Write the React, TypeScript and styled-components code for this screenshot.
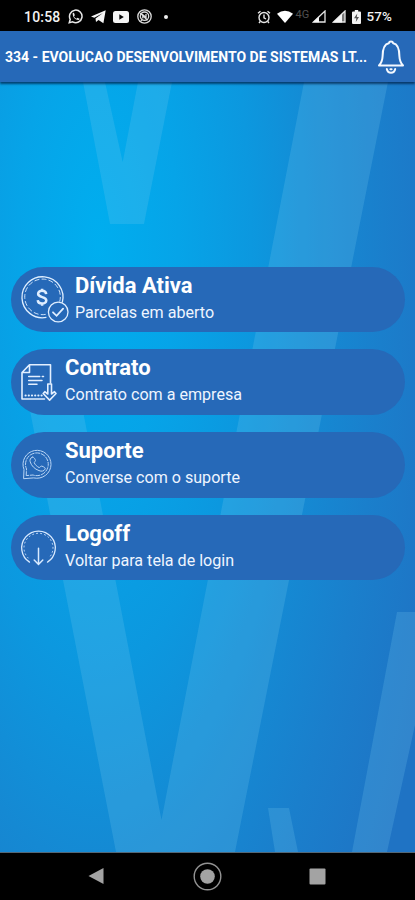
import React from "react";
import styled, { createGlobalStyle } from "styled-components";

const GlobalStyle = createGlobalStyle`
  * { box-sizing: border-box; }
  body { margin: 0; background: #000; }
`;

const Screen = styled.div`
  display: flex;
  flex-direction: column;
  width: 415px;
  height: 900px;
  overflow: hidden;
  color: #fff;
  font-family: Roboto, sans-serif;
  background: #000;
`;

const StatusBar = styled.div`
  display: flex;
  flex: none;
  height: 31px;
  padding: 2px 23px 0 24px;
  align-items: center;
  justify-content: space-between;
  background: #000;
`;

const StatusGroup = styled.div<{ $gap: number }>`
  display: flex;
  align-items: center;
  gap: ${(p) => p.$gap}px;
`;

const StatusText = styled.span<{ $size: number; $spacing?: number }>`
  font-size: ${(p) => p.$size}px;
  line-height: 16px;
  font-weight: 500;
  letter-spacing: ${(p) => p.$spacing ?? 0}px;
  color: #f2f2f2;
`;

const Network = styled.span`
  font-size: 11px;
  line-height: 12px;
  width: 15px;
  margin: -4px -5px 0 -3px;
  color: #505050;
`;

const Dot = styled.span`
  width: 4px;
  height: 4px;
  margin: 0 0 0 4px;
  border-radius: 50%;
  background: #eee;
`;

const Header = styled.header`
  display: flex;
  flex: none;
  position: relative;
  z-index: 1;
  height: 51px;
  padding: 0 10px 0 5px;
  align-items: center;
  justify-content: space-between;
  background: #2669b8;
  box-shadow: 0 2px 2px rgba(0, 35, 75, 0.75);
`;

const Company = styled.h1`
  margin: 0;
  width: 364px;
  font-size: 14px;
  line-height: 20px;
  font-weight: 700;
  letter-spacing: 0.01px;
  white-space: nowrap;
`;

const Content = styled.main`
  display: flex;
  position: relative;
  flex: 1;
  flex-direction: column;
  justify-content: center;
  gap: 17.3px;
  padding: 0 10.5px 87px 11px;
  background: radial-gradient(
    ellipse 365px 1000px at 98px 165px,
    #00aeef 0%,
    #06a4e8 22%,
    #0c98df 42%,
    #1589d3 62%,
    #1a7fcc 78%,
    #1f73c4 100%
  );
`;

const Backdrop = styled.svg`
  position: absolute;
  inset: 0;
`;

const Card = styled.button`
  display: flex;
  position: relative;
  flex: none;
  height: 65.5px;
  padding: 0 0 0 9px;
  align-items: center;
  border: 0;
  border-radius: 33px;
  color: #fff;
  background: #2669b8;
  font-family: inherit;
  text-align: left;
`;

const IconSlot = styled.span<{ $width: number }>`
  display: flex;
  flex: none;
  width: ${(p) => p.$width}px;
`;

const Labels = styled.span`
  display: flex;
  flex-direction: column;
  padding-bottom: 1.4px;
`;

const Title = styled.span`
  font-size: 22px;
  line-height: 28px;
  font-weight: 700;
`;

const Subtitle = styled.span`
  font-size: 16.1px;
  line-height: 26px;
  color: #eef5ff;
`;

const NavBar = styled.nav`
  display: flex;
  flex: none;
  height: 48px;
  padding: 0 89px 1px 88px;
  align-items: center;
  justify-content: space-between;
  border-top: 1px solid #536777;
  background: #000;
`;

const WhatsStatus = () => (
  <svg width="15" height="15" viewBox="0 0 24 24" fill="none" stroke="#e8e8e8" strokeWidth="2.4">
    <path d="M2 22l1.6-5.5A10 10 0 1 1 7.5 20.5Z" />
    <path d="M7.5 6.5l2-.5 1.5 4-1.5 1.5c1 2 2 3 4 4l1.5-1.7 3.5 1.7c.2 5-11.8 1-11-9Z" fill="#e8e8e8" stroke="none" />
  </svg>
);

const Telegram = () => (
  <svg width="15" height="14" viewBox="0 0 15 14">
    <path d="M0 6.6 14.7.2 12.4 13.2 7.5 9.9 5 12.1 4.5 8.5 12 3 3.3 7.8Z" fill="#f5f5f5" />
  </svg>
);

const Youtube = () => (
  <svg width="16" height="12" viewBox="0 0 16 12">
    <rect width="16" height="12" rx="2.5" fill="#f4f4f4" />
    <path d="m6.3 3.2 4.5 2.8-4.5 2.8Z" fill="#050505" />
  </svg>
);

const MutedBadge = () => (
  <svg width="15" height="15" viewBox="0 0 15 15" fill="none" stroke="#ddd" strokeWidth="1.3">
    <circle cx="7.5" cy="7.5" r="6.7" />
    <circle cx="7.5" cy="7.2" r="4.2" />
    <path d="m3.2 4 7.3 7.2M5.8 9.5V5.8L9 8.3V5M5 11.3l-1.5 1" />
  </svg>
);

const Alarm = () => (
  <svg width="14" height="14" viewBox="0 0 14 14" fill="none" stroke="#e7e7e7" strokeWidth="1.4">
    <circle cx="7" cy="7.5" r="5" />
    <path d="M7 4.6v3.2l2 1.2M1 3.3 3.5 1.2M13 3.3l-2.5-2.1M3.2 11.5 2 13M10.8 11.5 12 13" />
  </svg>
);

const Wifi = () => (
  <svg width="16" height="13" viewBox="0 0 16 13">
    <path d="M0 3.8Q8-2.5 16 3.8L8 13Z" fill="#fff" />
  </svg>
);

const Signal = ({ partial = false }: { partial?: boolean }) => (
  <svg width="14" height="13" viewBox="0 0 14 13">
    <path d="M13 1v11H1.5Z" fill={partial ? "none" : "#777"} stroke="#e5e5e5" strokeWidth="1.3" />
    <path d={partial ? "M1 12.3 7 6.5v5.8Z" : "M1 12.5 10 3.7v8.8Z"} fill="#f5f5f5" />
  </svg>
);

const Battery = () => (
  <svg width="9" height="14" viewBox="0 0 9 14">
    <path d="M2.8 0h3.4v1.5H8a1 1 0 0 1 1 1V13a1 1 0 0 1-1 1H1a1 1 0 0 1-1-1V2.5a1 1 0 0 1 1-1h1.8Z" fill="#f2f2f2" />
    <path d="M5.3 3.5 2 8.2h2.3L3.8 12 7 7.1H4.8Z" fill="#555" />
  </svg>
);

const Bell = () => (
  <svg width="28" height="34" viewBox="0 0 28 34" fill="none" stroke="#f3f8ff" strokeWidth="2" strokeLinecap="round" strokeLinejoin="round">
    <path d="M2 25.5h24c-2.2-2.4-3.4-5-3.6-9.3C22.3 8.5 20 3.8 16.2 3.2Q15.8 1.5 14 1.5t-2.2 1.7C8 3.8 5.7 8.5 5.6 16.2 5.4 20.5 4.2 23.1 2 25.5Z" />
    <path d="M9.8 29q.8 3.8 4.2 3.8t4.2-3.8M13.4 29.3h1.2" />
  </svg>
);

const DebtIcon = () => (
  <svg width="49" height="48" viewBox="0 0 49 48" fill="none" stroke="#dfeeff" strokeWidth="1.3">
    <path d="M26.4 42.4A20.5 20.5 0 1 1 42.3 27.5" />
    <path d="M25.7 39.4A17.8 17.8 0 1 1 39.7 26.6" strokeWidth="0.9" strokeDasharray="5 2.2" />
    <path d="M26.2 19.2c-.3-4.5-8.2-4.3-8.1-.3.2 4.2 8.2 2.3 8.2 6.6 0 4.1-8.4 4.1-8.5-.4M22.1 13.7v2.7M22.1 28v2.8" strokeWidth="2.5" />
    <circle cx="38.2" cy="37" r="9.8" />
    <path d="m33 37.3 3.6 3.5 6.5-7.2" strokeWidth="1.8" strokeLinecap="round" />
  </svg>
);

const ContractIcon = () => (
  <svg width="38" height="38" viewBox="0 0 38 38" fill="none" stroke="#e2efff" strokeWidth="1.6" strokeLinecap="round" strokeLinejoin="round">
    <path d="M24.5 36H2V9.5L9.5 1.8h21V20M9.5 2v7.5H2.3" />
    <path d="M8.7 13.5h11M22.3 13.5h1.2M8.7 17.5H22M8.7 21.3h8.3" strokeWidth="1.5" />
    <path d="M5.5 32.5h19" strokeWidth="2" strokeDasharray=".2 3" />
    <path d="M27.8 21h3.7v10l3-2.3 1.5 1.8-6.4 6.6-6.4-6.6 1.6-1.8 3 2.3Z" />
  </svg>
);

const SupportIcon = () => (
  <svg width="34" height="31" viewBox="0 0 34 31" fill="none" stroke="#b9d5f5" strokeWidth="1" strokeLinecap="round" strokeLinejoin="round">
    <path d="M3.6 29.3 4 20.5A14 14 0 1 1 14 29Z" />
    <path d="M6.2 26.6 6.5 20A11.4 11.4 0 1 1 13 26Z" strokeDasharray="4 1.6" />
    <path d="M12.1 8.2c1.5-.8 2.8 1.4 3.4 3.3.2 1-1.6 1.6-1.3 2.2 1 2.2 2.8 3.8 4.8 4.8.8.4 1.7-1.8 2.8-1.4 2 .8 4 1.5 3.3 3-1.1 2.2-3.6 2.5-6.1 1.5-4.4-1.6-7.5-4.7-8.8-8.7-.7-2.1.3-4 1.9-4.7Z" />
  </svg>
);

const LogoffIcon = () => (
  <svg width="37" height="36" viewBox="0 0 37 36" fill="none" stroke="#d8eaff" strokeWidth="1.3" strokeLinecap="round">
    <path d="M9.5 32.1A16.8 16.8 0 1 1 27.5 32.1" />
    <path d="M8.2 28A14.5 14.5 0 1 1 28.8 28" strokeWidth="0.9" strokeDasharray="1 3" />
    <path d="M18.5 18.2v15.7M14.2 30l4.3 4.4 4.3-4.4" strokeWidth="1.5" />
  </svg>
);

const items = [
  { title: "Dívida Ativa", subtitle: "Parcelas em aberto", Icon: DebtIcon, width: 55 },
  { title: "Contrato", subtitle: "Contrato com a empresa", Icon: ContractIcon, width: 45 },
  { title: "Suporte", subtitle: "Converse com o suporte", Icon: SupportIcon, width: 45 },
  { title: "Logoff", subtitle: "Voltar para tela de login", Icon: LogoffIcon, width: 45 },
];

export default function App() {
  return (
    <>
      <GlobalStyle />
      <Screen>
        <StatusBar>
          <StatusGroup $gap={7.6}>
            <StatusText $size={14} $spacing={0.2}>10:58</StatusText>
            <WhatsStatus />
            <Telegram />
            <Youtube />
            <MutedBadge />
            <Dot />
          </StatusGroup>
          <StatusGroup $gap={6}>
            <Alarm />
            <Wifi />
            <Network>4G</Network>
            <Signal partial />
            <Signal />
            <Battery />
            <StatusText $size={13.4} $spacing={0.1}>57%</StatusText>
          </StatusGroup>
        </StatusBar>
        <Header>
          <Company>334 - EVOLUCAO DESENVOLVIMENTO DE SISTEMAS LT...</Company>
          <Bell />
        </Header>
        <Content>
          <Backdrop width="415" height="770" viewBox="0 82 415 770" fill="#75c7ee" fillOpacity=".22">
            <path d="M83 82h22l17.7 80L138 82h34l-28 142h-34Z" />
            <path d="M25 385h53L161.5 820 304 82h84L235 852H116Z" />
            <path d="M397 612h18v113l-28 127h-35ZM268 808h21l9 44h-23Z" />
          </Backdrop>
          {items.map(({ title, subtitle, Icon, width }) => (
            <Card key={title}>
              <IconSlot $width={width}><Icon /></IconSlot>
              <Labels>
                <Title>{title}</Title>
                <Subtitle>{subtitle}</Subtitle>
              </Labels>
            </Card>
          ))}
        </Content>
        <NavBar>
          <svg width="17" height="18" viewBox="0 0 17 18"><path d="M.5 9 15.5 1v16Z" fill="#a3a3a3" /></svg>
          <svg width="29" height="29" viewBox="0 0 29 29"><circle cx="14.5" cy="14.5" r="13.3" fill="none" stroke="#929292" strokeWidth="1.4" /><circle cx="14.5" cy="14.5" r="7.3" fill="#a3a3a3" /></svg>
          <svg width="17" height="17" viewBox="0 0 17 17"><rect x=".5" y=".5" width="16" height="16" rx="1" fill="#a3a3a3" /></svg>
        </NavBar>
      </Screen>
    </>
  );
}
